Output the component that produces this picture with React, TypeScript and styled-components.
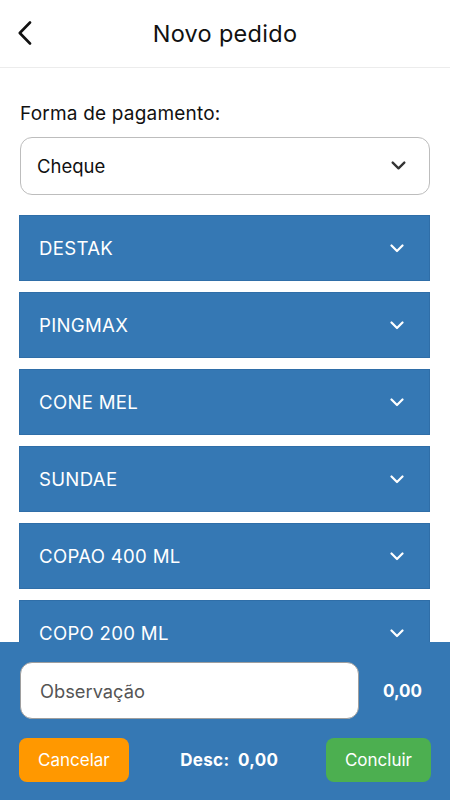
import React, { useState } from 'react';
import styled, { createGlobalStyle } from 'styled-components';

const GlobalStyle = createGlobalStyle`
  html, body {
    margin: 0;
    padding: 0;
    background: #ffffff;
    font-family: Inter, "Noto Sans", "Liberation Sans", sans-serif;
  }
  * { box-sizing: border-box; }
`;

const produtos = ['DESTAK', 'PINGMAX', 'CONE MEL', 'SUNDAE', 'COPAO 400 ML', 'COPO 200 ML'];

const Chevron: React.FC<{ color: string; size?: number }> = ({ color, size = 14 }) => (
  <svg width={size} height={size / 2 + 2} viewBox="0 0 14 9" fill="none">
    <path d="M1.5 1.5 L7 7 L12.5 1.5" stroke={color} strokeWidth="2.2" strokeLinecap="round" strokeLinejoin="round" />
  </svg>
);

const App: React.FC = () => {
  const [obs, setObs] = useState('');

  return (
    <Screen>
      <GlobalStyle />
      <Header>
        <BackButton aria-label="Voltar">
          <svg width="14" height="24" viewBox="0 0 14 24" fill="none">
            <path d="M12 1.5 L1.8 12 L12 22.5" stroke="#111" strokeWidth="2.6" strokeLinecap="round" strokeLinejoin="round" />
          </svg>
        </BackButton>
        <Title>Novo pedido</Title>
      </Header>

      <Content>
        <Label>Forma de pagamento:</Label>
        <Select>
          <span>Cheque</span>
          <Chevron color="#333" size={15} />
        </Select>

        <List>
          {produtos.map(p => (
            <Item key={p}>
              <span>{p}</span>
              <Chevron color="#ffffff" size={14} />
            </Item>
          ))}
        </List>
      </Content>

      <Footer>
        <Row>
          <ObsInput placeholder="Observação" value={obs} onChange={e => setObs(e.target.value)} />
          <Total>0,00</Total>
        </Row>
        <Row>
          <ActionButton $bg="#ff9800">Cancelar</ActionButton>
          <Desc>Desc:&nbsp; 0,00</Desc>
          <ActionButton $bg="#4caf50">Concluir</ActionButton>
        </Row>
      </Footer>
    </Screen>
  );
};

export default App;

const Screen = styled.div`
  position: relative;
  width: 450px;
  height: 800px;
  overflow: hidden;
  display: flex;
  flex-direction: column;
  background: #fff;
`;

const Header = styled.header`
  position: relative;
  height: 68px;
  flex-shrink: 0;
  display: flex;
  align-items: center;
  justify-content: center;
  border-bottom: 1px solid #ececec;
`;

const BackButton = styled.button`
  position: absolute;
  left: 18px;
  top: 21px;
  border: none;
  background: none;
  padding: 0;
  display: flex;
  cursor: pointer;
`;

const Title = styled.h1`
  margin: 0;
  font-size: 23.5px;
  font-weight: 400;
  color: #111;
  letter-spacing: 0.3px;
`;

const Content = styled.main`
  flex: 1;
  overflow: hidden;
  padding: 34px 20px 0 19px;
`;

const Label = styled.div`
  font-size: 19px;
  letter-spacing: 0.2px;
  color: #111;
  margin-left: 1px;
  margin-bottom: 12px;
`;

const Select = styled.div`
  height: 58px;
  margin-left: 1px;
  border: 1px solid #bdbdbd;
  border-radius: 12px;
  display: flex;
  align-items: center;
  justify-content: space-between;
  padding: 0 23px 0 16px;
  font-size: 18.5px;
  color: #111;
  margin-bottom: 20px;
`;

const List = styled.div`
  display: flex;
  flex-direction: column;
  gap: 11px;
`;

const Item = styled.div`
  height: 66px;
  background: #3578b4;
  border: 1px solid #2f6ea8;
  display: flex;
  align-items: center;
  justify-content: space-between;
  padding: 0 25px 0 19px;
  color: #fff;
  font-size: 18.6px;
  letter-spacing: 0.3px;
  flex-shrink: 0;
`;

const Footer = styled.footer`
  position: absolute;
  left: 0;
  right: 0;
  bottom: 0;
  height: 158px;
  background: #3578b4;
  padding: 20px 19px 0 19px;
  display: flex;
  flex-direction: column;
  gap: 19px;
`;

const Row = styled.div`
  display: flex;
  align-items: center;
  justify-content: space-between;
`;

const ObsInput = styled.input`
  width: 339px;
  height: 57px;
  margin-left: 1px;
  border: 1px solid #9e9e9e;
  border-radius: 12px;
  background: #fff;
  padding: 0 19px;
  font-size: 18.3px;
  font-family: inherit;
  color: #111;
  outline: none;
  &::placeholder {
    color: #555;
  }
`;

const Total = styled.span`
  color: #fff;
  font-weight: 700;
  font-size: 17px;
  margin-right: 9px;
`;

const ActionButton = styled.button<{ $bg: string }>`
  height: 44px;
  padding: 0 19px;
  border: none;
  border-radius: 8px;
  background: ${p => p.$bg};
  color: #fff;
  font-size: 17px;
  font-family: inherit;
  cursor: pointer;
`;

const Desc = styled.span`
  color: #fff;
  font-weight: 700;
  font-size: 17px;
  letter-spacing: 0.3px;
  margin-left: 4px;
`;
